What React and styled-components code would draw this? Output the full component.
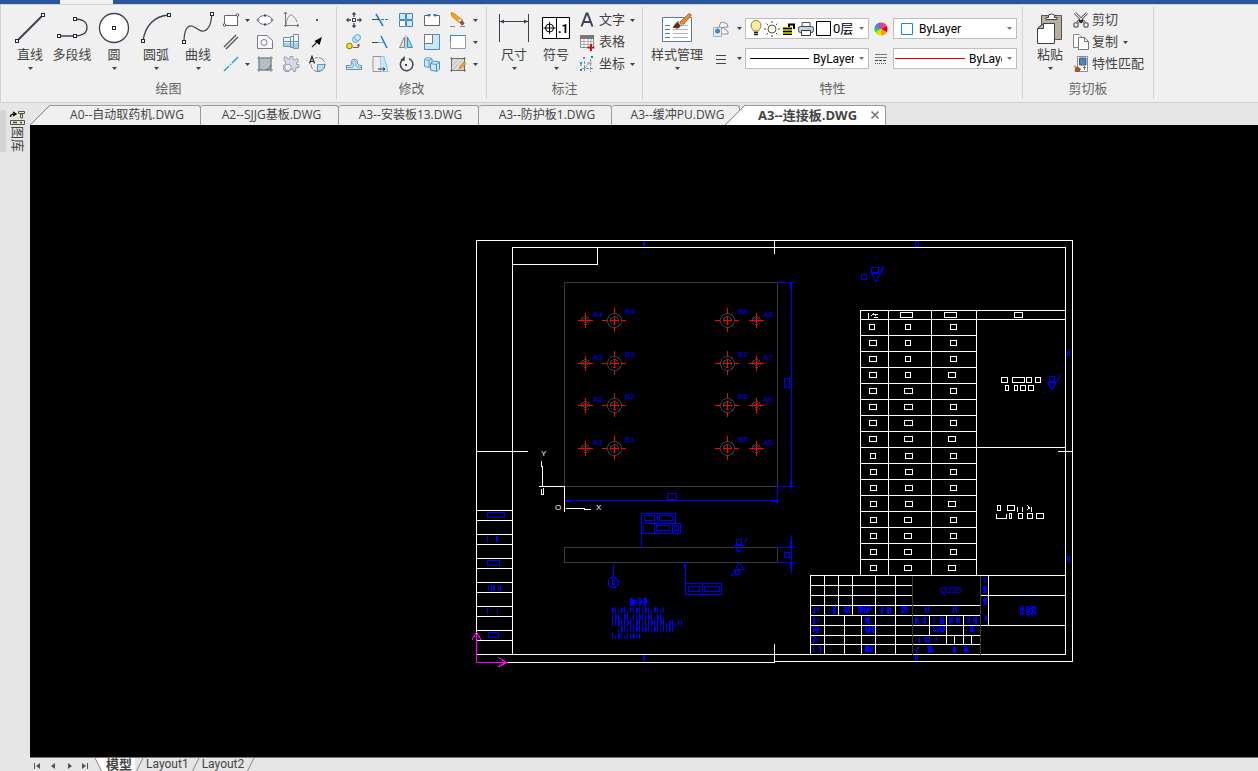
import React from 'react';
import styled, { createGlobalStyle, css } from 'styled-components';

const latin = 'Roboto, "Noto Sans CJK SC", "Noto Sans", sans-serif';
const humanist = '"Open Sans", "Noto Sans", "Noto Sans CJK SC", sans-serif';
const ink = '#3d4150';
const blue = '#1e7fc8';
const sky = '#c9e9fb';
const soft = '#8a9199';

const GlobalStyle = createGlobalStyle`
  * { box-sizing: border-box; }
  html, body, #root { height: 100%; }
  body { margin: 0; background: #e6e6e6; font-family: ${latin}; font-size: 13px; color: #444; overflow: hidden; }
  button, select { font: inherit; color: inherit; margin: 0; padding: 0; border: 0; background: none; }
`;

/* ---------- page frame ---------- */
const Page = styled.div`
  display: flex;
  flex-direction: column;
  height: 100vh;
`;
const TitleStrip = styled.div`
  height: 4px;
  flex: none;
  background: #2b579a;
  padding-left: 60px;
`;
const ActiveMenu = styled.div`
  width: 53px;
  height: 4px;
  background: #f0f0f0;
`;
const Ribbon = styled.header`
  display: flex;
  flex: none;
  height: 99px;
  padding-top: 2px;
  background: #f0f0f0;
  border: 1px solid #d2d2d2;
  border-right: 0;
`;
const Group = styled.section`
  display: flex;
  flex-direction: column;
  height: 92px;
  padding-top: 2px;
  padding-left: ${(p) => p.$inset}px;
  width: ${(p) => p.$width}px;
  border-right: 1px solid #d2d2d2;
`;
const GroupBody = styled.div`
  display: flex;
  height: 70px;
`;
const GroupTitle = styled.h2`
  margin: 0;
  margin-left: -${(p) => p.$inset}px;
  font-size: 13px;
  font-weight: 400;
  line-height: 20px;
  text-align: center;
  color: #666;
`;
const BigButton = styled.button`
  display: flex;
  flex-direction: column;
  align-items: center;
  width: ${(p) => p.$width || 42}px;
  padding-top: 3px;
  white-space: nowrap;
`;
const BigLabel = styled.span`
  line-height: 22px;
  height: 23px;
`;
const IconGrid = styled.div`
  display: grid;
  grid-template-columns: ${(p) => p.$cols};
  grid-auto-rows: 22px;
`;
const IconButton = styled.button`
  display: flex;
  align-items: center;
  justify-content: center;
`;
const LabelColumn = styled.div`
  display: flex;
  flex-direction: column;
`;
const LabelButton = styled.button`
  display: flex;
  align-items: center;
  height: 22px;
  gap: 2px;
  white-space: nowrap;
`;
const LabelText = styled.span`
  line-height: 20px;
  margin-right: 3px;
`;
const PropertyGrid = styled.div`
  display: grid;
  grid-template-columns: 24px 12px 124px 24px 124px;
  grid-auto-rows: 21px;
  row-gap: 9px;
  align-items: center;
  padding: 9px 0 0 2px;
`;
const Combo = styled.div`
  position: relative;
  display: flex;
  align-items: center;
  height: 21px;
  padding: 0 14px 0 ${(p) => p.$pad || 4}px;
  gap: ${(p) => p.$gap || 2}px;
  border: 1px solid #bdbdbd;
  background: #fff;
`;
const ComboSelect = styled.select`
  appearance: none;
  flex: 1;
  min-width: 0;
  height: 19px;
  outline: 0;
  overflow: hidden;
  font-size: ${(p) => p.$size || 12}px;
  color: #000;
`;
const ComboArrow = styled.span`
  position: absolute;
  right: 4px;
  top: 0;
  display: flex;
  align-items: center;
  height: 19px;
  pointer-events: none;
`;

/* ---------- workspace ---------- */
const Workspace = styled.div`
  display: flex;
  flex: 1;
  min-height: 0;
`;
const SideBar = styled.aside`
  display: flex;
  align-items: flex-start;
  width: 30px;
  flex: none;
  padding-top: 7px;
`;
const SideGrip = styled.div`
  width: 6px;
  height: 42px;
  background: #d4d4d4;
`;
const SideButton = styled.button`
  display: flex;
  flex-direction: column;
  align-items: center;
  width: 22px;
`;
const SideLabel = styled.span`
  writing-mode: vertical-rl;
  text-orientation: sideways;
  line-height: 14px;
  font-size: 13px;
`;
const Main = styled.main`
  display: flex;
  flex-direction: column;
  flex: 1;
  min-width: 0;
`;
const FileTabs = styled.nav`
  display: flex;
  flex: none;
  height: 22px;
  padding-top: 2px;
`;
const tabSurface = css`
  background: ${(p) => (p.$active ? '#fff' : '#f0f0f0')};
`;
const Slant = styled.span`
  width: 20px;
  height: 20px;
  flex: none;
  margin-left: ${(p) => (p.$active ? -15 : 0)}px;
  background: linear-gradient(
    to bottom right,
    transparent 48%,
    #8f8f8f 49%,
    #8f8f8f 51%,
    ${(p) => (p.$active ? '#fff' : '#f0f0f0')} 53%
  );
`;
const FileTab = styled.button`
  ${tabSurface}
  display: flex;
  align-items: center;
  justify-content: ${(p) => (p.$active ? 'space-between' : 'center')};
  width: ${(p) => p.$width}px;
  height: 20px;
  padding: 0 ${(p) => (p.$active ? 5 : 0)}px 2px ${(p) => (p.$active ? 13 : 4)}px;
  border-top: 1px solid #999;
  border-right: 1px solid #999;
  border-radius: ${(p) => (p.$rounded ? 3 : 0)}px 3px 0 0;
  font-family: ${humanist};
  font-size: ${(p) => (p.$active ? 13 : 12)}px;
  font-weight: ${(p) => (p.$active ? 700 : 400)};
  line-height: 16px;
  white-space: nowrap;
`;
const Canvas = styled.div`
  flex: 1;
  min-height: 0;
  background: #000;
`;
const Drawing = styled.svg`
  display: block;
  width: 100%;
  height: 100%;
`;
const DrawingText = styled.text`
  font-family: "Liberation Sans Narrow", "Liberation Sans", sans-serif;
  font-size: ${(p) => p.$size || 8}px;
`;
const LayoutBar = styled.nav`
  display: flex;
  flex: none;
  align-items: flex-start;
  height: 14px;
  overflow: hidden;
  border-top: 1px solid #777;
`;
const NavButton = styled.button`
  display: flex;
  justify-content: center;
  width: 16px;
  padding-top: 4px;
`;
const LayoutTab = styled.button`
  background: ${(p) => (p.$active ? '#fff' : 'none')};
  font-size: ${(p) => (p.$active ? 13 : 12)}px;
  font-weight: ${(p) => (p.$active ? 700 : 400)};
  line-height: 13px;
  height: 13px;
  padding: 0 ${(p) => (p.$active ? 3 : 2)}px;
  white-space: nowrap;
`;

/* ---------- icons ---------- */
const Svg = ({ s = 18, w, h, children, ...rest }) => (
  <svg width={w || s} height={h || s} viewBox={`0 0 ${w || s} ${h || s}`} fill="none" stroke={ink} aria-hidden="true" {...rest}>
    {children}
  </svg>
);
const Caret = ({ color = '#444' }) => (
  <svg width="5" height="3" viewBox="0 0 5 3" aria-hidden="true"><path d="M0 0h5L2.500 3z" fill={color} /></svg>
);
const Node = ({ x, y }) => <rect x={x - 1.5} y={y - 1.5} width="3" height="3" fill="#fff" stroke="#222733" />;

const LineIcon = () => <Svg s={32}><path d="M3 29 29 3" strokeWidth="2" /><Node x={3} y={29} /><Node x={29} y={3} /></Svg>;
const PolyIcon = () => <Svg s={32}><path d="M3 24h16c7 0 12-2.500 12-8.500S26 7 19 7" strokeWidth="1.300" /><Node x={3} y={24} /><Node x={19} y={24} /><Node x={19} y={7} /></Svg>;
const CircleIcon = () => <Svg s={32}><circle cx="16" cy="16" r="14.500" fill="#fff" strokeWidth="1.300" /><Node x={16} y={16} /></Svg>;
const ArcIcon = () => <Svg s={32}><path d="M3 29C5 14 14 4 29 3" strokeWidth="1.400" /><Node x={3} y={29} /><Node x={29} y={3} /></Svg>;
const CurveIcon = () => <Svg s={32}><path d="M2 30C2 17 6 13 10 14c6 2 7 6 12 5 6-2 7-9 8-17" strokeWidth="1.200" /><Node x={2} y={30} /><Node x={30} y={2} /></Svg>;

const RectIcon = () => <Svg><path d="M2.500 4.500h13v10h-13z" fill="#fff" stroke="#666" /><circle cx="2.500" cy="14" r="1.300" fill="#fff" stroke="#555" /><circle cx="15.500" cy="4" r="1.300" fill="#fff" stroke="#555" /></Svg>;
const DoubleLineIcon = () => <Svg><path d="M2 14 14 2M4 16 16 4" stroke="#555" strokeWidth="1.400" /></Svg>;
const RayIcon = () => <Svg><path d="M2 16 7 11m1-1 1-1m1-1 6-6" stroke="#27a4df" strokeWidth="1.500" /></Svg>;
const EllipseIcon = () => <Svg><ellipse cx="9" cy="9" rx="7" ry="4.500" fill="#fff" stroke="#6c7280" /><g fill="#fff" stroke="#6c7280"><circle cx="2" cy="9" r="1" /><circle cx="16" cy="9" r="1" /></g><path d="M8 4.500h2M8 13.500h2" strokeWidth="2" /></Svg>;
const RegionIcon = () => <Svg><path d="M1.500 2.500h9.500l5.500 5v8h-15z" fill="#fafafa" stroke="#777e88" /><circle cx="8" cy="9.500" r="3" stroke="#777e88" /></Svg>;
const HatchIcon = () => <Svg><path d="M3 3h12v12H3z" fill="#b3b9c2" stroke="#858b95" /><path d="M3 6l3-3M3 10l7-7M3 14 14 3M7 15l8-8" stroke="#cfd4da" strokeWidth=".6" /><path d="M1 3h16M1 15h16M3 1v16M15 1v16" stroke="#777d87" strokeWidth=".8" /><path d="M10 15q4-1 5-5" stroke="#555" strokeWidth=".8" /></Svg>;
const PlotIcon = () => <Svg><path d="M3.500 2v14M2 14.500h14" stroke="#777" /><path d="M4 14C5 5 9 2 11 5q3 2 4 6" stroke="#888" /><path d="m2 3 1.500-2L5 3M15 13l2 1.500L15 16" stroke="#555" strokeWidth=".8" /></Svg>;
const ShaftIcon = () => <Svg><path d="M1.500 4.500h7v9h-7zM8.500 3.500h3v11h-3zM11.500 1.500h5v14h-5z" fill="#f1f6fb" stroke="#7890a8" /><path d="M2 10h6v3H2zM9 10h2v4H9zM12 10h4v5h-4z" fill="#a9cdee" stroke="none" /><path d="M1 8.500h16" stroke="#4a92da" /></Svg>;
const GearIcon = () => <Svg><path d="M2 4.500V2h2.500l1 2h2.500V1.500h3V4l2 1 2.500-1.500 1 3-2 1v2h2.500v3H14l-.5 4h-2L11 14H9L7 16.500H3L1.500 14v-4L4 8.500z" fill="#d3d9e5" stroke="#98a1b2" /><circle cx="6" cy="12.500" r="3.200" fill="#f0f0f0" stroke="#98a1b2" /></Svg>;
const DotIcon = () => <Svg><path d="M8 8h2v2H8z" fill="#555" stroke="none" /></Svg>;
const ArrowIcon = () => <Svg><path d="M4 14 11 7" stroke="#333" strokeWidth="1.300" /><path d="m14 4-2.500 8L6.500 8z" fill="#000" stroke="none" /></Svg>;
const BalloonIcon = () => <Svg><path d="M9.500 9.500H17a7 7 0 0 1-7.500 7z" fill="#aee0f9" stroke="#5d7f95" strokeWidth=".8" /><circle cx="10" cy="9.500" r="7" stroke="#778" strokeDasharray="7 1.500" strokeWidth=".9" /><path d="M1 1h6v8H1z" fill="#f0f0f0" stroke="none" /><path d="m1.500 8.500 2.500-7 2.500 7M2.500 6.500h3" stroke="#222" strokeWidth="1.200" /></Svg>;

const MoveIcon = () => <Svg><rect x="7.500" y="7.500" width="3" height="3" fill="#fff" /><path d="M9 2v4M9 12v4M2 9h4M12 9h4" strokeWidth="1.300" /><path d="m9 1 2.500 2.500h-5zM9 17l-2.500-2.500h5zM1 9l2.500-2.500v5zM17 9l-2.500 2.500v-5z" fill={ink} stroke="none" /></Svg>;
const TrimIcon = () => <Svg><path d="M5 3l7 12" stroke={blue} strokeWidth="1.500" /><path d="M1 8.500h7" /><path d="M10 8.500h7" stroke={blue} strokeDasharray="3 1" /></Svg>;
const ArrayIcon = () => <Svg><path d="M2.500 2.500h6v6h-6zM9.500 2.500h6v6h-6zM9.500 9.500h6v6h-6z" fill={sky} stroke="#4b86b5" /><path d="M2.500 9.500h6v6h-6z" fill="#fff" stroke="#4b86b5" /></Svg>;
const BreakIcon = () => <Svg><path d="M5 4.500H1.500v10h15v-10H13" fill="#fff" stroke="#666" /><path d="M6 3v3M12 3v3" stroke={blue} /><path d="M4.500 4h3M10.500 4h3" stroke={blue} strokeWidth="1.800" /></Svg>;
const EraseIcon = () => <Svg><path d="m2 1.500 1 4 7 6 3-3-8-6z" fill="#f4a51d" stroke="#d98b0d" /><path d="m9 9.500 2-2 2 2-2 2z" fill="#fff" stroke="#aaa" /><path d="m11 11.500 2-2 2 3-2 1.500z" fill="#a44c3e" stroke="#88392c" /><path d="M1 15.500h5M11 15.500h5" stroke="#888" /></Svg>;
const CopyIcon = () => <Svg><circle cx="4.500" cy="13" r="2.800" fill="#f6e31a" stroke="#777700" /><circle cx="10.500" cy="6.500" r="3" fill={sky} stroke="#58a5d8" /><circle cx="12.500" cy="4.500" r="3" fill={sky} stroke="#58a5d8" /><path d="M8 14.500h5.500V11m-1.500 2 1.500-2 1.500 2" stroke="#b8453c" /></Svg>;
const ExtendIcon = () => <Svg><path d="M1 9.500h6" /><path d="M7.500 9.500h6" stroke="#59a" strokeDasharray="2 1" /><path d="M10 3l6 12" stroke={blue} strokeWidth="1.500" /></Svg>;
const MirrorIcon = () => <Svg><path d="M7.500 4v10.500h-5z" fill="#e2e2e2" stroke="#888" /><path d="M10.500 4v10.500h5z" fill="#9bd7f4" stroke="#3b8fc3" /><path d="M9 2v14" stroke="#777" strokeWidth=".6" /></Svg>;
const ScaleIcon = () => <Svg><path d="M1.500 1.500h15v15h-15z" fill={sky} stroke="#4f8db5" /><path d="M1.500 1.500h8v9h-8z" fill="#fff" stroke="#777" /></Svg>;
const StretchIcon = () => <Svg><path d="M1.500 2.500h15v13h-15z" fill="#fff" stroke="#999" /><path d="M1.500 2.500h15" stroke={blue} strokeDasharray="3 1" /><path d="M1.500 3v6" stroke={blue} strokeDasharray="2 1" /></Svg>;
const OffsetIcon = () => <Svg><path d="M1.500 10.500h4q2-1 .5-4a3.500 3.500 0 0 1 6.500 0q-1 4 4 4v4h-15z" fill={sky} stroke="#648fae" /><path d="M2 12.500h5.500q2-2 0-5c1-2 2.500-2 3.500 0-1 4 1 5 5 5" stroke="#648fae" strokeWidth=".8" /></Svg>;
const MoveEdgeIcon = () => <Svg><path d="M2 1.500h8v15H2z" fill="#eee" stroke="#999" /><path d="M10 1.500h3l4 15h-7" fill={sky} stroke="#8bc4e4" /><path d="M7 14h7m-2-1.500 2 1.500-2 1.500" stroke="#334" /></Svg>;
const RotateIcon = () => <Svg><path d="M6 4.300A6.300 6.300 0 1 0 12 3.600" strokeWidth="1.500" /><path d="m8 1-.5 5-4-1z" fill={ink} stroke="none" /><rect x="8" y="9" width="2" height="2" fill={ink} stroke="none" /></Svg>;
const BlockIcon = () => <Svg><path d="M1.500 4.500 4 2.500l5 1v7l-3 2-4.500-1zM1.500 4.500l4.500 1v7M6 5.500l3-2" fill={sky} stroke="#5d9fc8" /><path d="m7.500 8.500 3-2.500 6 1v7L14 16.500l-6.500-1.500zM7.500 8.500l6 1V16M13.500 9.500l3-2.500" fill={sky} stroke="#4b93c0" /></Svg>;
const EditHatchIcon = () => <Svg><path d="M2.500 3.500h13v12h-13z" fill="#cfcfcf" stroke="#777" /><path d="m3 8 4-4M3 13l9-9M6 15 15 5" stroke="#eee" /><path d="M1 3.500h16M1 15.500h16M2.500 2v15M15.500 2v15" stroke="#666" strokeWidth=".7" /><path d="m11 11 4-4 2 1.500-4 4-2.500 1z" fill="#f0a42a" stroke="#c37a18" strokeWidth=".7" /></Svg>;

const DimensionIcon = () => <Svg s={32}><path d="M1.500 2v28M30.500 2v28" /><path d="M2 9.500h28" /><path d="m2 9.500 4-2v4zM30 9.500l-4-2v4z" fill={ink} stroke="none" /></Svg>;
const SymbolText = styled.text`font: 700 12px Roboto, sans-serif;`;
const SymbolIcon = () => <Svg s={32}><path d="M2.500 5.500h27v21h-27zM16.500 5.500v21" fill="#fff" stroke="#000" /><circle cx="9.500" cy="16" r="4" stroke="#000" /><path d="M3.500 16h12M9.500 10v12" stroke="#000" /><SymbolText x="18" y="21" fill="#000" stroke="none">.1</SymbolText></Svg>;
const TextIcon = () => <Svg w={20} h={18}><path d="m4.500 15.500 5-13h1l5 13M6 11h8" strokeWidth="2" /></Svg>;
const TableIcon = () => <Svg w={20} h={18}><path d="M3.500 2.500h13v12h-13z" fill="#fff" stroke="#888" /><path d="M3 2h14v4H3z" fill="#777" stroke="none" /><path d="M3 8.500h14M3 11.500h14M7 6v8M11 6v8M14 6v8" stroke="#aaa" /><path d="M14 11v7M10.500 14.500h7" stroke="#b71c1c" strokeWidth="2" /></Svg>;
const CoordIcon = () => <Svg w={20} h={18}><path d="M7.500 6v10M5 13.500h12M7.500 13.500l6-7M13.500 4v13M10 8h5" stroke="#8a9199" strokeDasharray="3 1" /><path d="m3 7 1 2 1-2M4 9v2M3 14l2 2m0-2-2 2M14 1l2 2m0-2-2 2M6 2l1 2 1-2" stroke={blue} /></Svg>;

const StyleIcon = () => <Svg s={32}><path d="M1.500 5.500h29v24h-29z" fill="#fff" stroke="#557ca3" /><path d="M4 13.500h5M4 17.500h5M4 21.500h5M4 25.500h5" stroke="#557ca3" /><path d="M12 17.500h15M12 21.500h15M12 25.500h15M20 13.500h7" stroke="#a9b4c4" /><path d="m19 10 9-8.500 2.500 1.500-8 9.500z" fill="#e4912b" stroke="#b96b1c" /><path d="m17 9 4 4-2 1-3-3z" fill="#d9d9d9" stroke="#888" /><path d="M12 15c3-1 1-4 5-4l2 3c-1 3-4 2-7 1z" fill="#57301c" stroke="#57301c" /></Svg>;
const LayerIcon = () => <Svg><path d="M7 6.500 9 2l6 1.500 1 3.500-7 .5zM9 9.500l2-2 5 4v2.500h-7z" fill="#f4f6fa" stroke={soft} /><path d="M1.500 7.500h8v9h-8z" fill="#e9edf1" stroke="#a5acb4" /><circle cx="5.500" cy="11" r="2.500" fill="#4a87b9" stroke="none" /></Svg>;
const LinesIcon = () => <Svg><path d="M4 5.500h10M4 9.500h10M4 13.500h10" stroke="#444" /></Svg>;
const ColorWheel = () => (
  <Svg s={16} stroke="none">
    <path d="M8 8V1.500A6.500 6.500 0 0 1 13.600 4.700z" fill="#f4415f" /><path d="M8 8 13.600 4.700A6.500 6.500 0 0 1 13.600 11.300z" fill="#e60026" /><path d="m8 8 5.600 3.300A6.500 6.500 0 0 1 8 14.500z" fill="#ff9d00" /><path d="M8 8v6.500a6.500 6.500 0 0 1-5.600-3.200z" fill="#d8e800" /><path d="m8 8-5.600 3.300a6.500 6.500 0 0 1 0-6.600z" fill="#35cf40" /><path d="M8 8 2.400 4.700A6.500 6.500 0 0 1 8 1.500z" fill="#8758ec" /><path d="M8 8 1.600 7a6 6 0 0 1 .8-2.300z" fill="#1c98f0" />
  </Svg>
);
const LinetypeIcon = () => <Svg><path d="M3 4.500h12M3 7.500h12" stroke="#777" /><path d="M3 10.500h12" stroke="#444" strokeDasharray="3 1" /><path d="M3 13.500h12" stroke="#555" strokeDasharray="1 1" /></Svg>;
const BulbIcon = () => <Svg w={12} h={18}><path d="M3.500 11C3 9 1 8 1 5.500a5 5 0 0 1 10 0C11 8 9 9 8.500 11z" fill="#ffec9e" stroke="#8d7a44" /><path d="M4 12.500h4M4 14.500h4" stroke="#222" strokeWidth="1.500" /></Svg>;
const SunIcon = () => <Svg s={16}><circle cx="8" cy="8" r="4" fill="#fffbe0" stroke="#555" /><path d="M8 0v2M8 14v2M0 8h2M14 8h2M2.500 2.500 4 4M12 12l1.500 1.500M13.500 2.500 12 4M4 12l-1.500 1.500" stroke="#444" /></Svg>;
const LockIcon = () => <Svg w={14} h={16}><path d="M7 8V3.500h5V8" stroke="#000" strokeWidth="2" /><path d="M1 6h9v8H1z" fill="#a5a400" stroke="none" /><path d="M1 7.500h9M1 10.500h9M1 13.500h9" stroke="#000" /></Svg>;
const PrinterIcon = () => <Svg s={16}><path d="M4 6V1.500h8V6" fill="#fff" stroke="#555" /><rect x=".5" y="5.500" width="15" height="6" rx="2" fill="#c8d2da" stroke="#444" /><path d="M3.500 9.500h9v5h-9z" fill="#fff" stroke="#333" /></Svg>;
const Swatch = ({ color, size }) => <Svg s={size}><path d={`M.5 .5h${size - 1}v${size - 1}H.5z`} fill="#fff" stroke={color} /></Svg>;

const PasteIcon = () => <Svg s={32}><path d="M7.500 3.500h20v24h-20z" fill="#b9aea0" stroke="#555" /><path d="M12 5.500h2.500V3q3-2 6 0v2.500H23v2H12z" fill="#fff" stroke={ink} /><path d="M9.500 11.500h11v20h-17v-15z" fill="#fff" stroke={ink} /><path d="M9.500 11.500v5h-6z" fill="#b8b8b8" stroke={ink} /></Svg>;
const CutIcon = () => <Svg><path d="m3 2 10 10M15 2 5 12" stroke="#777" strokeWidth="3" /><path d="m3 2 10 10M15 2 5 12" stroke="#eee" strokeWidth="1" /><circle cx="4" cy="14" r="2.200" strokeWidth="1.500" stroke="#777" /><circle cx="14" cy="14" r="2.200" strokeWidth="1.500" stroke="#777" /><path d="m7 9 2 2 2-2" stroke="#222" strokeWidth="2" /></Svg>;
const PagesIcon = () => <Svg><path d="M1.500 1.500H7l3 3v10H1.500z" fill="#fff" stroke="#888" /><path d="M6.500 4.500h6l4 4v8h-10z" fill="#fff" stroke="#777" /><path d="M12.500 4.500v4h4" stroke="#777" /></Svg>;
const MatchIcon = () => <Svg><path d="M5.500 1.500h10v15h-10z" fill="#fff" stroke="#889" /><path d="M7.500 3h6.500v7H7.500z" fill="#4e83b8" stroke="#365f8d" /><path d="M11 12.500h3M12.500 11v4" stroke="#777" /><path d="m2 11 3 2" stroke="#d88c35" strokeWidth="2" /><path d="M4 13c2-1 5 0 4 2s-3 2-5 1z" fill="#a65b20" stroke="#8a4a1a" /></Svg>;
const LibraryIcon = () => <Svg s={16}><path d="M1 1h15v15H1z" fill="#e7e8d0" stroke="none" /><path d="M1.500 7c0-3 2-3 4.500-3m-2-2 3 2-3 2" stroke="#000" strokeWidth="1.300" /><path d="M9.500 1.500h6v2h-6zM11.500 4h2v4h-2zM1.500 10.500h14v4h-14z" stroke="#555" /><path d="M4 12.500h4M11 12.500h2" stroke="#444" strokeWidth="1.500" /></Svg>;
const CloseIcon = () => <Svg s={10}><path d="m1.500 1.500 7 7M8.500 1.500l-7 7" stroke="#777" strokeWidth="1.700" /></Svg>;

/* ---------- drawing ---------- */
const h = (y, a, b) => `M${a - 0.5} ${y}H${b + 0.5}`;
const v = (x, a, b) => `M${x} ${a - 0.5}V${b + 0.5}`;
const box = ([x, y, w, t]) => `M${x} ${y}h${w}v${t}h${-w}z`;

const sheetLines = [
  h(240, 476, 1072), v(476, 240, 662), v(1072, 240, 661), h(661, 774, 1072), h(662, 476, 774),
  h(247, 512, 1065), v(512, 247, 654), v(1065, 247, 654), h(654, 476, 1065),
  h(264, 512, 597), v(597, 247, 264), v(774, 240, 253), v(774, 644, 661), h(451, 476, 527), h(451, 1058, 1072),
  ...[510, 520, 534, 544, 558, 568, 582, 592, 606, 616, 630, 640].map((y) => h(y, 476, 512)),
];
const tableLines = [
  h(310, 860, 1065), h(319, 860, 1065), h(447, 976, 1065), h(575, 810, 1065),
  ...[860, 888, 931, 976].map((x) => v(x, 310, 575)),
  ...Array.from({ length: 16 }, (_, i) => h(335 + i * 16, 860, 976)),
];
const titleLines = [
  v(810, 575, 654), h(585, 810, 912), h(595, 810, 912), h(605, 810, 980), h(615, 810, 980), h(625, 810, 980),
  h(635, 810, 980), h(644, 810, 980), v(824, 575, 654), v(838, 575, 615), v(852, 575, 615), v(844, 615, 654),
  v(861, 615, 654), v(875, 575, 654), v(895, 575, 654), v(988, 575, 625), h(595, 980, 1065), h(625, 980, 1065),
  v(929, 615, 635), v(946, 615, 644), v(963, 615, 635), v(954, 635, 644), v(963, 635, 644), v(971, 635, 644),
];
const cells = Array.from({ length: 16 }, (_, i) => {
  const y = 324 + i * 16 + (i > 7 ? 1 : 0);
  return [
    [i > 7 ? 870 : 869, y, i === 0 || i === 8 ? 5 : i > 7 ? 6 : 7, 5],
    i < 4 ? [905, y, 5, 5] : i < 8 || i > 11 ? [904, y, i > 7 ? 7 : 8, 5] : [905, y, 7, 5],
    i % 4 === 3 ? [948, y, 7, 5] : [950, y, 6, 5],
  ];
}).flat();
const noteBoxes = [
  [900, 312, 12, 5], [944, 312, 12, 5], [1014, 312, 8, 5],
  [1001, 377, 6, 5], [1012, 377, 12, 5], [1026, 377, 5, 5], [1035, 377, 5, 5],
  [1005, 385, 3, 5], [1014, 385, 3, 5], [1020, 385, 5, 5], [1028, 385, 5, 5],
  [997, 505, 3, 5], [1007, 505, 7, 5], [1009, 513, 2, 5], [1018, 513, 4, 5], [1027, 513, 5, 5], [1036, 513, 7, 5],
];
const blueBoxes = [
  [915, 241, 3, 5], [915, 655, 2, 5], [1067, 350, 2, 5], [1067, 556, 2, 5],
  [487, 512, 17, 5], [487, 560, 12, 5], [488, 632, 10, 5],
  [784, 378, 5, 9], [667, 493, 9, 6], [784, 552, 5, 5],
  [641, 513, 34, 10], [644, 515, 10, 5], [659, 515, 13, 5], [641, 523, 39, 10], [656, 525, 13, 5], [674, 525, 4, 5],
  [685, 583, 36, 11], [688, 586, 11, 5], [704, 586, 15, 5],
  [736, 539, 5, 5], [735, 570, 4, 4], [612, 579, 2, 5],
  [861, 274, 5, 5], [871, 267, 7, 5], [1049, 376, 5, 5],
];
const blueLines = [
  h(282, 777, 794), v(791, 282, 486), h(486, 777, 794), v(790, 282, 288), v(790, 480, 486),
  h(500, 564, 777), v(777, 486, 503), h(501, 565, 570), h(501, 771, 777), v(564, 486, 503),
  v(791, 536, 572), h(547, 777, 794), h(562, 777, 794), v(790, 542, 547), v(790, 562, 567),
  v(641, 513, 547), v(657, 513, 523), v(654, 523, 533), v(672, 523, 533), v(643, 525, 530),
  v(613, 564, 577), v(685, 562, 583), v(684, 562, 567), v(702, 583, 594),
  v(643, 240, 245), v(644, 240, 245), v(643, 655, 660), v(644, 655, 660),
  v(487, 536, 541), v(496, 536, 541), v(497, 536, 541), v(487, 608, 613), v(497, 609, 613),
  v(488, 585, 590), v(491, 585, 590), v(493, 585, 590), v(494, 585, 590), v(498, 585, 590), v(500, 585, 590),
  h(545, 734, 743), h(569, 737, 744), h(273, 871, 879), h(382, 1047, 1055),
];
const blueMarks = 'M735 546l3 6 4-6M744 543l2-5M735 568l4-6 4 6M731 576l4-7M872 274l3 7 4-7 4-8M1048 383l3 6 5-7 4-7';

/* Tiny annotation marks: dense columns of pixels, seeded by their place so that they stay the same. */
const strokes = ([x, y, w, t]) => {
  let seed = x * 131 + y * 17;
  const next = () => {
    seed = (seed * 1103515245 + 12345) % 2147483648;
    return seed / 2147483648;
  };
  let d = '';
  for (let i = 0; i < w; i += 1) {
    const full = next() < 0.4;
    for (let j = 0; j < t; j += 1) {
      if (full || next() < 0.5) d += `M${x + i - 0.5} ${y + j}h1`;
    }
  }
  return d;
};
const spacedStrokes = ([x, y, w, t]) => {
  let d = '';
  for (let i = 0; i <= w; i += 3) {
    const k = (i * 5 + y) % 11;
    d += `M${x + i} ${y + (k > 8 ? 3 : 0)}V${y + t}`;
    if (k < 3) d += `M${x + i + 1} ${y + 1}v${t - 2}`;
  }
  return d;
};
const paragraphs = [[612, 606, 52, 6], [612, 613, 52, 6], [612, 619, 70, 6], [618, 625, 56, 6], [612, 632, 27, 6]];
const labels = [
  [630, 598, 5, 8], [635, 598, 3, 5], [639, 598, 8, 8],
  [813, 607, 2, 7], [817, 607, 2, 7], [828, 607, 2, 6], [833, 606, 3, 8], [843, 606, 7, 7], [858, 606, 14, 7], [881, 607, 2, 7], [887, 607, 4, 7], [901, 606, 7, 7],
  [813, 617, 2, 7], [818, 618, 1, 4], [865, 617, 5, 7], [813, 626, 6, 7], [864, 626, 11, 7], [813, 636, 6, 7], [813, 646, 2, 6], [818, 646, 3, 7], [865, 645, 8, 7],
  [925, 606, 4, 7], [953, 606, 4, 7], [915, 617, 4, 7], [922, 617, 4, 6], [933, 617, 2, 7], [940, 617, 4, 7], [949, 617, 4, 7], [956, 617, 4, 6], [966, 616, 4, 7], [973, 617, 4, 7],
  [933, 625, 12, 7], [970, 626, 5, 6], [918, 637, 2, 6], [924, 637, 6, 7], [935, 636, 2, 6], [916, 647, 3, 6], [927, 646, 6, 7], [953, 647, 3, 6], [964, 646, 5, 7],
  [983, 576, 4, 7], [983, 586, 4, 7], [983, 598, 4, 7], [984, 615, 3, 6], [1020, 606, 4, 9], [1026, 606, 10, 9],
];
const holeRows = [[320, 4], [363, 3], [405, 2], [448, 1]];

const SmallHole = ({ x, y }) => (
  <g>
    <circle cx={x} cy={y} r="4" stroke="#3a3a3a" /><circle cx={x} cy={y} r="2" stroke="#3a3a3a" />
    <path d={`M${x - 7.5} ${y}h15M${x} ${y - 7.5}v15`} stroke="red" />
  </g>
);
const BigHole = ({ x, y }) => (
  <g>
    <circle cx={x} cy={y} r="7" stroke="#3a3a3a" /><circle cx={x} cy={y} r="4" stroke="#3a3a3a" />
    <path d={`M${x - 12.5} ${y}h5M${x - 4.5} ${y}h9M${x + 6.5} ${y}h5M${x} ${y - 12.5}v5M${x} ${y - 4.5}v9M${x} ${y + 6.5}v5`} stroke="red" />
  </g>
);
const PlateDrawing = () => (
  <Drawing viewBox="30 125 1228 632" preserveAspectRatio="xMinYMin meet" fill="none" role="img" aria-label="连接板">
    <g transform="translate(.5 .5)" shapeRendering="crispEdges">
      <path d="M564 282h213v204H564zM564 547h213v15H564z" stroke="#3a3a3a" />
      <path d={[...blueLines, ...blueBoxes.map(box), blueMarks, ...labels.map(strokes), ...paragraphs.map(spacedStrokes)].join('')} stroke="#00f" />
      <circle cx="613" cy="582" r="5" stroke="#00f" />
      <path d={[...sheetLines, ...tableLines, ...titleLines, ...[...cells, ...noteBoxes].map(box)].join('')} stroke="#fff" />
      <path d="M868 312v6M870 316l3-3 3 3M872 314h5M873 317h4M1017 506v5M1022 506v5M1027 505l2 2-3 3M1028 507l2 2M1031 506v5M996 513v5h10v-5" stroke="#fff" />
      <path d="M541 460v6h1v20M538.500 486h25.500v25M541 488v6h2v-7M565 508h19v1h6" stroke="#fff" />
      <path d="M912 575v79M980 575v79" stroke="#3a3a3a" />
      <path d="M476 633v29h31M471 640l5-8 5 8M498 657l8 5-8 4" stroke="#f0f" />
      {holeRows.map(([y]) => (
        <g key={y}>
          <SmallHole x={585} y={y} /><BigHole x={614} y={y} /><BigHole x={727} y={y} /><SmallHole x={756} y={y} />
        </g>
      ))}
    </g>
    <g fill="#00f">
      {holeRows.map(([y, n]) => (
        <g key={n}>
          <DrawingText x="593" y={y - 3}>{`A${n}`}</DrawingText>
          <DrawingText x="625" y={y - 6}>{`B${n}`}</DrawingText>
          <DrawingText x="738" y={y - 6}>{`B${n + 4}`}</DrawingText>
          <DrawingText x="763" y={y - 3}>{`A${n + 4}`}</DrawingText>
        </g>
      ))}
      <DrawingText x="940" y="593" $size={9}>Q235</DrawingText>
    </g>
    <g fill="#fff">
      <DrawingText x="541" y="456">Y</DrawingText>
      <DrawingText x="555" y="510">O</DrawingText>
      <DrawingText x="596" y="510">X</DrawingText>
    </g>
  </Drawing>
);

/* ---------- composed parts ---------- */
const Big = ({ icon, label, width, arrow = true }) => (
  <BigButton type="button" $width={width}>{icon}<BigLabel>{label}</BigLabel>{arrow && <Caret />}</BigButton>
);
const Small = ({ icon, name }) => <IconButton type="button" aria-label={name}>{icon}</IconButton>;
const Labelled = ({ icon, label, arrow }) => (
  <LabelButton type="button">{icon}<LabelText>{label}</LabelText>{arrow && <Caret />}</LabelButton>
);
const RibbonGroup = ({ title, width, inset = 0, children }) => (
  <Group $width={width} $inset={inset}><GroupBody>{children}</GroupBody><GroupTitle $inset={inset}>{title}</GroupTitle></Group>
);
const Picker = ({ name, value, pad, gap, size, children }) => (
  <Combo $pad={pad} $gap={gap}>
    {children}
    <ComboSelect aria-label={name} defaultValue={value} $size={size}><option>{value}</option></ComboSelect>
    <ComboArrow><Caret color="#777" /></ComboArrow>
  </Combo>
);
const files = [
  ['A0--自动取药机.DWG', 151], ['A2--SJJG基板.DWG', 138], ['A3--安装板13.DWG', 140], ['A3--防护板1.DWG', 133], ['A3--缓冲PU.DWG', 128],
];
const Divider = () => <Svg w={9} h={14}><path d="M1 14 8 0" stroke="#888" /></Svg>;

export default function App() {
  return (
    <Page>
      <GlobalStyle />
      <TitleStrip><ActiveMenu /></TitleStrip>
      <Ribbon>
        <RibbonGroup title="绘图" width={336} inset={8}>
          <Big icon={<LineIcon />} label="直线" />
          <Big icon={<PolyIcon />} label="多段线" arrow={false} />
          <Big icon={<CircleIcon />} label="圆" />
          <Big icon={<ArcIcon />} label="圆弧" />
          <Big icon={<CurveIcon />} label="曲线" />
          <IconGrid $cols="24px 9px 26px 26px 26px">
            <Small icon={<RectIcon />} name="矩形" /><Small icon={<Caret />} name="矩形选项" /><Small icon={<EllipseIcon />} name="椭圆" /><Small icon={<PlotIcon />} name="公式曲线" /><Small icon={<DotIcon />} name="点" />
            <Small icon={<DoubleLineIcon />} name="平行线" /><span /><Small icon={<RegionIcon />} name="局部放大" /><Small icon={<ShaftIcon />} name="孔轴" /><Small icon={<ArrowIcon />} name="箭头" />
            <Small icon={<RayIcon />} name="中心线" /><Small icon={<Caret />} name="中心线选项" /><Small icon={<HatchIcon />} name="剖面线" /><Small icon={<GearIcon />} name="齿轮" /><Small icon={<BalloonIcon />} name="圆形标记" />
          </IconGrid>
        </RibbonGroup>
        <RibbonGroup title="修改" width={150} inset={4}>
          <IconGrid $cols="26px 26px 26px 26px 26px 8px">
            <Small icon={<MoveIcon />} name="平移" /><Small icon={<TrimIcon />} name="裁剪" /><Small icon={<ArrayIcon />} name="阵列" /><Small icon={<BreakIcon />} name="打断" /><Small icon={<EraseIcon />} name="删除" /><Small icon={<Caret />} name="删除选项" />
            <Small icon={<CopyIcon />} name="平移复制" /><Small icon={<ExtendIcon />} name="延伸" /><Small icon={<MirrorIcon />} name="镜像" /><Small icon={<ScaleIcon />} name="缩放" /><Small icon={<StretchIcon />} name="拉伸" /><Small icon={<Caret />} name="拉伸选项" />
            <Small icon={<OffsetIcon />} name="等距线" /><Small icon={<MoveEdgeIcon />} name="移动边" /><Small icon={<RotateIcon />} name="旋转" /><Small icon={<BlockIcon />} name="分解" /><Small icon={<EditHatchIcon />} name="编辑剖面线" /><Small icon={<Caret />} name="编辑选项" />
          </IconGrid>
        </RibbonGroup>
        <RibbonGroup title="标注" width={156} inset={6}>
          <Big icon={<DimensionIcon />} label="尺寸" />
          <Big icon={<SymbolIcon />} label="符号" />
          <LabelColumn>
            <Labelled icon={<TextIcon />} label="文字" arrow /><Labelled icon={<TableIcon />} label="表格" /><Labelled icon={<CoordIcon />} label="坐标" arrow />
          </LabelColumn>
        </RibbonGroup>
        <RibbonGroup title="特性" width={380} inset={4}>
          <Big icon={<StyleIcon />} label="样式管理" width={60} />
          <PropertyGrid>
            <Small icon={<LayerIcon />} name="图层" /><Small icon={<Caret />} name="图层选项" />
            <Picker name="当前图层" value="0层" gap={2} size={13}><BulbIcon /><SunIcon /><LockIcon /><PrinterIcon /><Swatch size={15} color="#000" /></Picker>
            <Small icon={<ColorWheel />} name="颜色" />
            <Picker name="当前颜色" value="ByLayer" pad={7} gap={6}><Swatch size={12} color="#1c86e0" /></Picker>
            <Small icon={<LinesIcon />} name="线宽" /><Small icon={<Caret />} name="线宽选项" />
            <Picker name="当前线宽" value="ByLayer" gap={4}><Svg w={59} h={3}><path d="M0 1.500h59" stroke="#000" /></Svg></Picker>
            <Small icon={<LinetypeIcon />} name="线型" />
            <Picker name="当前线型" value="ByLayer" pad={1} gap={4}><Svg w={70} h={3}><path d="M0 1.500h70" stroke="#e00000" /></Svg></Picker>
          </PropertyGrid>
        </RibbonGroup>
        <RibbonGroup title="剪切板" width={131} inset={5}>
          <Big icon={<PasteIcon />} label="粘贴" width={44} />
          <LabelColumn>
            <Labelled icon={<CutIcon />} label="剪切" /><Labelled icon={<PagesIcon />} label="复制" arrow /><Labelled icon={<MatchIcon />} label="特性匹配" />
          </LabelColumn>
        </RibbonGroup>
      </Ribbon>
      <Workspace>
        <SideBar>
          <SideGrip />
          <SideButton type="button"><LibraryIcon /><SideLabel>图库</SideLabel></SideButton>
        </SideBar>
        <Main>
          <FileTabs>
            <Slant />
            {files.map(([name, width], i) => (
              <FileTab key={name} type="button" $width={width} $rounded={i > 0}>{name}</FileTab>
            ))}
            <Slant $active />
            <FileTab type="button" $active $width={141}>A3--连接板.DWG<CloseIcon /></FileTab>
          </FileTabs>
          <Canvas><PlateDrawing /></Canvas>
          <LayoutBar>
            <NavButton type="button" aria-label="第一个"><Svg w={8} h={8}><path d="M.5 1v6" stroke="#555" /><path d="M6 1v6L2 4z" fill="#555" stroke="none" /></Svg></NavButton>
            <NavButton type="button" aria-label="上一个"><Svg w={8} h={8}><path d="M5 1v6L1 4z" fill="#555" stroke="none" /></Svg></NavButton>
            <NavButton type="button" aria-label="下一个"><Svg w={8} h={8}><path d="M2 1v6l4-3z" fill="#555" stroke="none" /></Svg></NavButton>
            <NavButton type="button" aria-label="最后一个"><Svg w={8} h={8}><path d="M5.500 1v6" stroke="#555" /><path d="M0 1v6l4-3z" fill="#555" stroke="none" /></Svg></NavButton>
            <Svg w={9} h={14}><path d="M1 0h8v14z" fill="#fff" stroke="none" /><path d="m1 0 7 14" stroke="#888" /></Svg>
            <LayoutTab type="button" $active>模型</LayoutTab>
            <Divider />
            <LayoutTab type="button">Layout1</LayoutTab>
            <Divider />
            <LayoutTab type="button">Layout2</LayoutTab>
            <Divider />
          </LayoutBar>
        </Main>
      </Workspace>
    </Page>
  );
}
